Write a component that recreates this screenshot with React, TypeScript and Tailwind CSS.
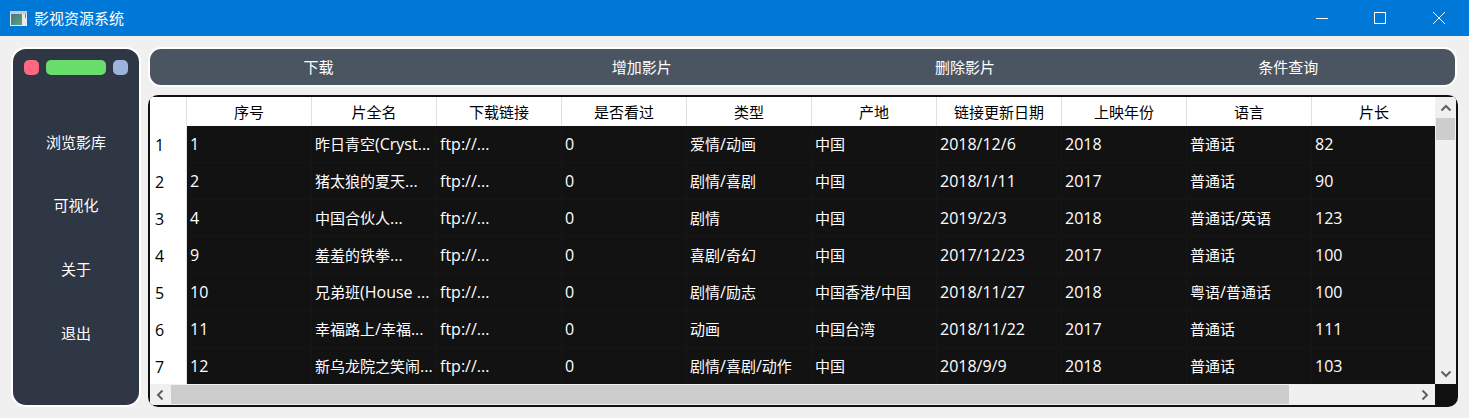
const headers = ["序号", "片全名", "下载链接", "是否看过", "类型", "产地", "链接更新日期", "上映年份", "语言", "片长"];
const rows = [
  ["1", "昨日青空(Cryst...", "ftp://...", "0", "爱情/动画", "中国", "2018/12/6", "2018", "普通话", "82"],
  ["2", "猪太狼的夏天...", "ftp://...", "0", "剧情/喜剧", "中国", "2018/1/11", "2017", "普通话", "90"],
  ["4", "中国合伙人...", "ftp://...", "0", "剧情", "中国", "2019/2/3", "2018", "普通话/英语", "123"],
  ["9", "羞羞的铁拳...", "ftp://...", "0", "喜剧/奇幻", "中国", "2017/12/23", "2017", "普通话", "100"],
  ["10", "兄弟班(House ...", "ftp://...", "0", "剧情/励志", "中国香港/中国", "2018/11/27", "2018", "粤语/普通话", "100"],
  ["11", "幸福路上/幸福...", "ftp://...", "0", "动画", "中国台湾", "2018/11/22", "2017", "普通话", "111"],
  ["12", "新乌龙院之笑闹...", "ftp://...", "0", "剧情/喜剧/动作", "中国", "2018/9/9", "2018", "普通话", "103"],
];
const rowNums = ["1", "2", "3", "4", "5", "6", "7"];

function Mixed({ text }: { text: string }) {
  const parts = text.split(/([\u4e00-\u9fff]+)/).filter(Boolean);
  return (
    <span>
      {parts.map((p, i) =>
        /[\u4e00-\u9fff]/.test(p) ? (
          <span key={i} className="text-[15px]">{p}</span>
        ) : (
          <span key={i}>{p}</span>
        ),
      )}
    </span>
  );
}

function Chevron({ d }: { d: string }) {
  return (
    <svg width="12" height="12" viewBox="0 0 12 12" fill="none" stroke="#606060" strokeWidth="2">
      <path d={d} />
    </svg>
  );
}

export default function App() {
  return (
    <div className="w-[1469px] h-[418px] bg-[#f0f0f0] overflow-hidden text-[16px] leading-5 font-['Open_Sans','Noto_Sans_CJK_SC',sans-serif]">
      <div className="h-9 bg-[#0078d7] flex items-center text-white pl-[10px] pr-[24px]">
        <svg width="17" height="15" viewBox="0 0 17 15" className="shrink-0">
          <defs>
            <linearGradient id="ic" x1="0" y1="0" x2="1" y2="1">
              <stop offset="0" stopColor="#4a6f8f" />
              <stop offset="1" stopColor="#5aa86e" />
            </linearGradient>
          </defs>
          <rect width="17" height="15" fill="#e6eaea" />
          <rect width="17" height="3" fill="#c3ccd2" />
          <rect x="1" y="3" width="11" height="11" fill="url(#ic)" />
          <rect x="15" y="3" width="1" height="4" fill="#6f8288" />
        </svg>
        <span className="ml-[7px] text-[15px]">影视资源系统</span>
        <div className="ml-auto flex items-center">
          <div className="w-3 h-px bg-white"></div>
          <div className="ml-[46px] w-3 h-3 border border-white"></div>
          <svg className="ml-[47px]" width="12" height="12" viewBox="0 0 12 12" stroke="white" strokeWidth="1">
            <path d="M0 0L12 12M12 0L0 12" />
          </svg>
        </div>
      </div>

      <div className="flex pt-[11px] pl-[11px] gap-[7px]">
        <div className="w-[130px] h-[360px] shrink-0 rounded-[15px] border-2 border-white bg-[#2f3644] text-white text-[15px] flex flex-col items-center">
          <div className="flex gap-[7px] mt-[11px] w-full pl-[11px]">
            <div className="w-[15px] h-[15px] rounded-[5px] bg-[#ff6880]"></div>
            <div className="w-[60px] h-[15px] rounded-[5px] bg-[#6ade6c]"></div>
            <div className="w-[15px] h-[15px] rounded-[5px] bg-[#9db3de]"></div>
          </div>
          <div className="mt-[35px] h-[63px] flex items-center">浏览影库</div>
          <div className="h-[64px] flex items-center">可视化</div>
          <div className="h-[64px] flex items-center">关于</div>
          <div className="h-[64px] flex items-center">退出</div>
        </div>

        <div className="w-[1310px] flex flex-col gap-2">
          <div className="w-[1309px] h-[40px] rounded-[13px] border-2 border-white bg-[#4b5562] text-white text-[15px] grid grid-cols-4 items-center text-center pl-[7px] pr-[5px]">
            <span>下载</span>
            <span>增加影片</span>
            <span>删除影片</span>
            <span>条件查询</span>
          </div>

          <div className="h-[312px] rounded-[10px] bg-[#111011] p-[2px] overflow-hidden flex">
            <div className="w-[1285px] flex flex-col min-w-0">
              <div className="h-[287px] shrink-0 flex overflow-hidden">
                <div className="w-[37px] shrink-0 bg-white text-black border-r border-[#e0e0e0] flex flex-col">
                  <div className="h-[29px] shrink-0"></div>
                  {rowNums.map((n) => (
                    <div key={n} className="h-[37px] shrink-0 pl-[5px] flex items-center">{n}</div>
                  ))}
                </div>
                <div className="flex-1 min-w-0 overflow-hidden">
                  <div className="flex h-[29px] w-[1250px] bg-white text-black text-[15px]">
                    {headers.map((h) => (
                      <div key={h} className="w-[125px] shrink-0 border-r border-[#e0e0e0] flex items-center justify-center">{h}</div>
                    ))}
                  </div>
                  {rows.map((r) => (
                    <div key={r[0]} className="flex h-[37px] w-[1250px] bg-[#131213] text-white border-b border-[#171617]">
                      {r.map((c, i) => (
                        <div key={i} className="w-[125px] shrink-0 border-r border-[#171617] pl-[3px] flex items-center whitespace-nowrap">
                          <Mixed text={c} />
                        </div>
                      ))}
                    </div>
                  ))}
                </div>
              </div>
              <div className="h-[21px] shrink-0 bg-[#f0f0f0] flex items-center">
                <div className="w-[20px] flex justify-center"><Chevron d="M8.5 1.5L4 6L8.5 10.5" /></div>
                <div className="ml-px w-[1118px] h-[19px] bg-[#cdcdcd]"></div>
                <div className="ml-auto w-[21px] flex justify-center"><Chevron d="M3.5 1.5L8 6L3.5 10.5" /></div>
              </div>
            </div>
            <div className="w-[21px] shrink-0 h-[287px] bg-[#f0f0f0] flex flex-col items-center">
              <div className="h-[21px] flex items-center"><Chevron d="M1.5 8.5L6 4L10.5 8.5" /></div>
              <div className="w-[19px] h-[22px] bg-[#cdcdcd]"></div>
              <div className="mt-auto h-[21px] flex items-center"><Chevron d="M1.5 3.5L6 8L10.5 3.5" /></div>
            </div>
          </div>
        </div>
      </div>
    </div>
  );
}
